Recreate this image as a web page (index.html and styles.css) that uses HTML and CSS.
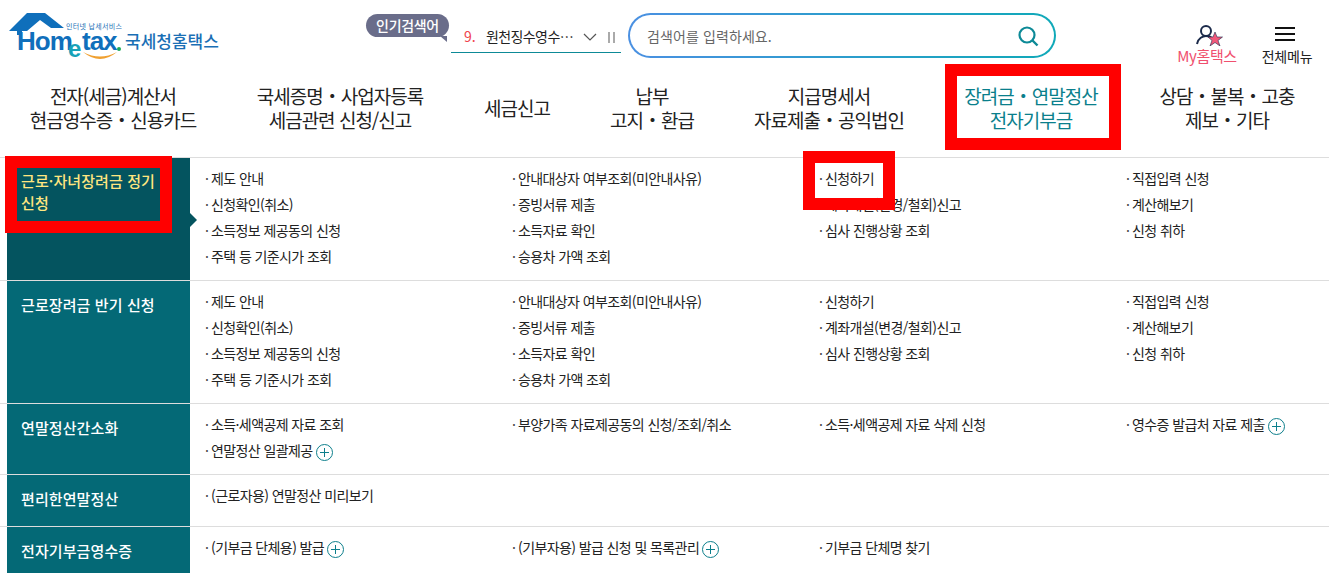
FILE: index.html
```html
<!DOCTYPE html>
<html lang="ko">
<head>
<meta charset="utf-8">
<title>국세청홈택스</title>
<link rel="stylesheet" href="styles.css">
</head>
<body>
<header class="top">
  <a class="logo">
    <svg class="logo-mark" width="122" height="62" viewBox="0 0 122 62">
      <path d="M9 31 L27 13 L45 13 L64 28 L51 28 L40 20 L27 31 L22 31 L22 35 L17 35 L17 31 Z" fill="#0f6fbb"/>
      <text x="66" y="28.5" class="logo-small">인터넷 납세서비스</text>
      <text x="17" y="50" class="logo-home">Hom</text>
      <text x="68" y="57" class="logo-e">e</text>
      <text x="82" y="50" class="logo-home">tax</text>
      <circle cx="119" cy="49" r="2" fill="#1aa85a"/>
      <path d="M83 52 Q100 66 117 52 Q100 61 83 52 Z" fill="#f0a030"/>
    </svg>
    <span class="logo-name">국세청홈택스</span>
  </a>
  <div class="popular">
    <span class="bubble">인기검색어</span>
    <div class="ticker">
      <span class="rank">9.</span>
      <span class="term">원천징수영수…</span>
      <svg class="chev" width="14" height="8" viewBox="0 0 14 8"><path d="M1 1 L7 7 L13 1" fill="none" stroke="#555" stroke-width="1.2"/></svg>
      <span class="pause"></span>
    </div>
  </div>
  <div class="search">
    <span class="placeholder">검색어를 입력하세요.</span>
    <svg width="22" height="22" viewBox="0 0 22 22"><circle cx="10" cy="10" r="7.5" fill="none" stroke="#0d8a97" stroke-width="2.2"/><path d="M15.5 15.5 L20.5 20.5" stroke="#0d8a97" stroke-width="2.4"/></svg>
  </div>
  <a class="util my">
    <svg width="28" height="22" viewBox="0 0 28 22"><circle cx="10" cy="7" r="5" fill="none" stroke="#1b2a4a" stroke-width="2"/><path d="M1 20 C2 14 7 12 10 12 C13 12 15 13 16 14" fill="none" stroke="#1b2a4a" stroke-width="2"/><path d="M19 8 L21 13 L26.500 13 L22 16.500 L24 22 L19 18.500 L14 22 L16 16.500 L12 13 L17 13 Z" fill="#f2587a" stroke="#1b2a4a" stroke-width=".6"/></svg>
    <span>My홈택스</span>
  </a>
  <a class="util all">
    <span class="burger"><i></i><i></i><i></i></span>
    <span>전체메뉴</span>
  </a>
</header>

<nav class="gnb">
  <a>전자(세금)계산서<br>현금영수증・신용카드</a>
  <a>국세증명・사업자등록<br>세금관련 신청/신고</a>
  <a>세금신고</a>
  <a>납부<br>고지・환급</a>
  <a>지급명세서<br>자료제출・공익법인</a>
  <a class="on">장려금・연말정산<br>전자기부금</a>
  <a>상담・불복・고충<br>제보・기타</a>
</nav>

<main class="board">
  <section class="row h123 active">
    <h3>근로·자녀장려금 정기<br>신청</h3>
    <ul>
      <li>제도 안내</li><li>안내대상자 여부조회(미안내사유)</li><li>신청하기</li><li>직접입력 신청</li>
      <li>신청확인(취소)</li><li>증빙서류 제출</li><li>계좌개설(변경/철회)신고</li><li>계산해보기</li>
      <li>소득정보 제공동의 신청</li><li>소득자료 확인</li><li>심사 진행상황 조회</li><li>신청 취하</li>
      <li>주택 등 기준시가 조회</li><li>승용차 가액 조회</li>
    </ul>
  </section>
  <section class="row h123">
    <h3>근로장려금 반기 신청</h3>
    <ul>
      <li>제도 안내</li><li>안내대상자 여부조회(미안내사유)</li><li>신청하기</li><li>직접입력 신청</li>
      <li>신청확인(취소)</li><li>증빙서류 제출</li><li>계좌개설(변경/철회)신고</li><li>계산해보기</li>
      <li>소득정보 제공동의 신청</li><li>소득자료 확인</li><li>심사 진행상황 조회</li><li>신청 취하</li>
      <li>주택 등 기준시가 조회</li><li>승용차 가액 조회</li>
    </ul>
  </section>
  <section class="row h71">
    <h3>연말정산간소화</h3>
    <ul>
      <li>소득·세액공제 자료 조회</li><li>부양가족 자료제공동의 신청/조회/취소</li><li>소득·세액공제 자료 삭제 신청</li><li>영수증 발급처 자료 제출<span class="plus"></span></li>
      <li>연말정산 일괄제공<span class="plus"></span></li>
    </ul>
  </section>
  <section class="row h52">
    <h3>편리한연말정산</h3>
    <ul>
      <li>(근로자용) 연말정산 미리보기</li>
    </ul>
  </section>
  <section class="row h52">
    <h3>전자기부금영수증</h3>
    <ul>
      <li>(기부금 단체용) 발급<span class="plus"></span></li><li>(기부자용) 발급 신청 및 목록관리<span class="plus"></span></li><li>기부금 단체명 찾기</li>
    </ul>
  </section>
</main>

<div class="mark mark-nav"></div>
<div class="mark mark-side"></div>
<div class="mark mark-apply"></div>
</body>
</html>
```
FILE: styles.css
```css
* { box-sizing: border-box; }
html, body { margin: 0; padding: 0; }
body {
  width: 1329px;
  height: 573px;
  overflow: hidden;
  position: relative;
  background: #fff;
  color: #222;
  font-family: "Noto Sans CJK KR", "Noto Sans", sans-serif;
}
ul { list-style: none; margin: 0; padding: 0; }
h3 { margin: 0; }

.top {
  height: 64px;
  display: flex;
  align-items: flex-start;
}
.logo {
  width: 365px;
  height: 64px;
  display: flex;
  align-items: flex-start;
}
.logo-mark { margin-top: 0; flex: none; }
.logo-small { font-size: 7px; fill: #1a6fb5; letter-spacing: .3px; }
.logo-home { font-family: "Liberation Sans", sans-serif; font-weight: 700; font-size: 26px; fill: #0f6fbb; letter-spacing: -1px; }
.logo-e { font-family: "Liberation Sans", sans-serif; font-weight: 700; font-size: 24px; fill: #17a2b8; }
.logo-name {
  font-size: 17px;
  font-weight: 500;
  letter-spacing: 0;
  color: #1a6fb5;
  margin: 29px 0 0 3px;
  line-height: 24px;
  white-space: nowrap;
}
.popular { position: relative; width: 263px; height: 64px; flex: none; }
.bubble {
  position: absolute;
  left: 1px;
  top: 14px;
  width: 83px;
  height: 23px;
  border-radius: 12px;
  background: #6a6d8a;
  color: #fff;
  font-size: 14px;
  font-weight: 500;
  line-height: 22px;
  text-align: center;
  letter-spacing: -.3px;
}
.bubble::after {
  content: "";
  position: absolute;
  right: 2px;
  bottom: -5px;
  border-style: solid;
  border-width: 0 7px 6px 0;
  border-color: transparent #6a6d8a transparent transparent;
}
.ticker {
  position: absolute;
  left: 86px;
  top: 20px;
  width: 170px;
  height: 33px;
  border-bottom: 1px solid #0d8a97;
  display: flex;
  align-items: center;
  font-size: 14px;
  padding-left: 13px;
  white-space: nowrap;
}
.rank { color: #f0444c; width: 22px; }
.term { width: 97px; letter-spacing: -.6px; color: #222; }
.chev { margin-left: 0; margin-top: 2px; }
.pause { width: 7px; height: 11px; margin-left: 11px; border-left: 2px solid #aaa; border-right: 2px solid #aaa; margin-top: 2px; }
.search {
  width: 428px;
  height: 45px;
  margin-top: 13px;
  flex: none;
  border-radius: 23px;
  border: 2px solid transparent;
  background: linear-gradient(#fff, #fff) padding-box, linear-gradient(90deg, #4a90e2, #0fa9b8) border-box;
  display: flex;
  align-items: center;
  justify-content: space-between;
  padding: 0 15px 0 17px;
}
.placeholder { font-size: 14px; color: #666; letter-spacing: .1px; }
.util {
  display: flex;
  flex-direction: column;
  align-items: center;
  white-space: nowrap;
}
.my { margin: 24px 0 0 115px; width: 72px; color: #f0506e; gap: 0; line-height: 20px; font-size: 15px; letter-spacing: -.4px; }
.my svg { margin-left: 6px; }
.all { margin: 27px 0 0 14px; width: 60px; color: #222; line-height: 20px; gap: 5px; font-size: 14px; letter-spacing: -.2px; }
.burger { display: flex; flex-direction: column; gap: 4px; width: 20px; margin-right: 4px; }
.burger i { display: block; height: 2px; background: #111; }

.gnb {
  height: 94px;
  display: grid;
  grid-template-columns: 226px 228px 126px 144px 210px 194px 198px;
  align-items: center;
  text-align: center;
  font-size: 19px;
  line-height: 24px;
  letter-spacing: -1px;
  font-weight: 400;
  color: #222;
  border-bottom: 1px solid #ddd;
  padding-bottom: 5px;
}
.gnb .on { color: #0a7f8c; }

.board { display: flex; flex-direction: column; }
.row {
  display: flex;
  border-bottom: 1px solid #ddd;
  position: relative;
}
.h123 { height: 123px; }
.h71 { height: 71px; }
.h52 { height: 52px; }
.row:last-child { border-bottom: 0; }
.row h3 {
  margin-left: 7px;
  width: 183px;
  flex: none;
  background: #046976;
  color: #fff;
  font-size: 15px;
  font-weight: 500;
  line-height: 22px;
  padding: 13px 14px 0;
  letter-spacing: .1px;
}
.row.active h3 { background: #04545f; color: #ffe680; position: relative; padding-top: 12px; }
.row.active h3::after {
  content: "";
  position: absolute;
  left: 100%;
  top: 55px;
  border-style: solid;
  border-width: 7px 0 7px 7px;
  border-color: transparent transparent transparent #04545f;
}
.row ul {
  flex: 1;
  display: grid;
  grid-template-columns: repeat(3, 307px) 1fr;
  grid-auto-rows: 26px;
  padding: 7px 0 0 15px;
  font-size: 14px;
  line-height: 26px;
  letter-spacing: -.6px;
  color: #222;
}
.row li { white-space: nowrap; display: flex; align-items: center; }
.row li::before { content: "·"; width: 6px; color: #444; flex: none; }
.plus {
  width: 17px;
  height: 17px;
  margin-left: 3px;
  margin-top: 4px;
  border: 1px solid #0d7f8c;
  border-radius: 50%;
  flex: none;
  background:
    linear-gradient(#0d7f8c, #0d7f8c) center / 9px 1px no-repeat,
    linear-gradient(#0d7f8c, #0d7f8c) center / 1px 9px no-repeat;
}

.mark { position: absolute; border: 12px solid #f00; }
.mark-nav { left: 945px; top: 64px; width: 176px; height: 86px; }
.mark-side { left: 5px; top: 156px; width: 167px; height: 77px; }
.mark-apply { left: 803px; top: 151px; width: 92px; height: 59px; }
```
